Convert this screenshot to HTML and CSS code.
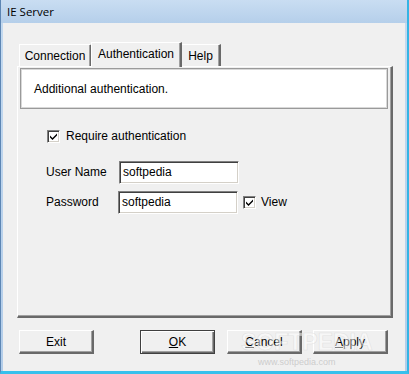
FILE: index.html
```html
<!DOCTYPE html>
<html>
<head>
<meta charset="utf-8">
<link rel="stylesheet" href="styles.css">
</head>
<body>
<div class="window">
  <div class="titlebar"><span class="title">IE Server</span></div>
  <div class="client">
    <div class="tabs">
      <div class="tab">Connection</div>
      <div class="tab active">Authentication</div>
      <div class="tab">Help</div>
    </div>
    <div class="pane">
      <div class="info">Additional authentication.</div>
      <div class="form">
        <label class="check-row">
          <span class="checkbox"><svg width="9" height="9" viewBox="0 0 9 9"><path d="M1 3.5 L3.5 6 L8 1.5 L8 3.5 L3.5 8 L1 5.5 Z" fill="#000"/></svg></span>
          <span>Require authentication</span>
        </label>
        <div class="field-row">
          <span class="label">User Name</span>
          <span class="input">softpedia</span>
        </div>
        <div class="field-row">
          <span class="label">Password</span>
          <span class="input pw">softpedia</span>
          <label class="view">
            <span class="checkbox"><svg width="9" height="9" viewBox="0 0 9 9"><path d="M1 3.5 L3.5 6 L8 1.5 L8 3.5 L3.5 8 L1 5.5 Z" fill="#000"/></svg></span>
            <span>View</span>
          </label>
        </div>
      </div>
    </div>
    <div class="buttons">
      <div class="btn">Exit</div>
      <div class="btn default ok"><u>O</u>K</div>
      <div class="btn cancel"><u>C</u>ancel</div>
      <div class="btn apply"><u>A</u>pply</div>
      <div class="watermark">SOFTPEDIA</div>
      <div class="watermark-url">www.softpedia.com</div>
    </div>
  </div>
</div>
</body>
</html>
```
FILE: styles.css
```css
* { box-sizing: border-box; }
html, body { margin: 0; padding: 0; background: #fff; }
body { width: 409px; height: 374px; overflow: hidden; font-family: "Liberation Sans", Arial, sans-serif; font-size: 12px; color: #000; }

.window {
  width: 409px; height: 374px;
  display: flex; flex-direction: column;
  background: linear-gradient(#c4daf0, #b3cde9);
  border-left: 1px solid #5d86b4;
  border-right: 2px solid #34b4e4;
  border-bottom: 3px solid #38c0ec;
  padding: 0 2px 0 2px;
}
.titlebar {
  height: 23px;
  display: flex; align-items: center;
  background: linear-gradient(#c9ddf2, #b5cfea);
  margin: 0 -2px;
  padding-left: 6px;
}
.title { font-family: "Open Sans", "DejaVu Sans", sans-serif; font-size: 11.5px; color: #000; }

.client {
  flex: 1;
  background: #f0f0f0;
  padding: 19px 12px 0 14px;
  display: flex; flex-direction: column;
  position: relative;
  overflow: hidden;
}

.tabs { display: flex; height: 24px; padding-left: 2px; align-items: flex-end; position: relative; z-index: 2; }
.tab {
  height: 22px;
  padding: 0 5px;
  display: flex; align-items: center; justify-content: center;
  border-top: 1px solid #fff;
  border-left: 1px solid #fff;
  border-right: 2px solid #696969;
  box-shadow: inset -1px 0 #a0a0a0;
  background: #f0f0f0;
}
.tab:first-child { width: 73px; }
.tab.active {
  width: 91px;
  height: 25px;
  margin-bottom: -1px;
  padding-bottom: 3px;
  margin-left: -1px;
  margin-right: -1px;
  position: relative;
  z-index: 3;
}
.tab:last-child { width: 40px; }

.pane {
  height: 252px;
  border-top: 1px solid #fff;
  border-left: 1px solid #fff;
  border-right: 2px solid #696969;
  border-bottom: 2px solid #696969;
  box-shadow: inset -1px -1px #a0a0a0;
  background: #f0f0f0;
  padding: 1px 3px 0 2px;
}
.info {
  height: 41px;
  background: #fff;
  border: 1px solid #9a9a9a;
  box-shadow: inset 0 0 0 1px #d8d8d8;
  display: flex; align-items: center;
  padding-left: 13px;
}
.form { padding: 20px 0 0 26px; }

.check-row { display: flex; align-items: center; gap: 6px; height: 14px; margin-left: 1px; }
.checkbox {
  width: 13px; height: 13px;
  background: #fff;
  border: 1px solid; border-color: #808080 #fff #fff #808080;
  box-shadow: inset 1px 1px #404040, inset -1px -1px #d4d0c8;
  display: flex; align-items: center; justify-content: center;
  flex: none;
}
.checkbox svg { display: block; }

.field-row { display: flex; align-items: center; height: 24px; margin-top: 6px; }
.check-row + .field-row { margin-top: 17px; }
.label { width: 73px; }
.input {
  width: 120px; height: 23px;
  background: #fff;
  border: 1px solid; border-color: #808080 #fff #fff #808080;
  box-shadow: inset 1px 1px #404040, inset -1px -1px #d4d0c8;
  display: flex; align-items: center;
  padding-left: 3px;
}
.input.pw { margin-left: -1px; }
.view { display: flex; align-items: center; gap: 5px; margin-left: 5px; }

.buttons {
  display: flex; align-items: center;
  margin-top: 12px;
  padding-left: 2px;
  position: relative;
}
.btn {
  width: 75px; height: 24px;
  display: flex; align-items: center; justify-content: center;
  border-top: 1px solid #fff; border-left: 1px solid #fff;
  border-right: 2px solid #696969; border-bottom: 2px solid #696969;
  box-shadow: inset -1px -1px #a0a0a0;
  background: #f0f0f0;
}
.btn.default {
  border: 1px solid #404040;
  box-shadow: inset 1px 1px #fff, inset -1px -1px #696969, inset -2px -2px #a0a0a0;
}
.ok { margin-left: 46px; }
.cancel { margin-left: 12px; }
.apply { margin-left: 11px; }
.btn u { text-decoration: underline; }

.watermark {
  position: absolute; left: 224px; top: -1px;
  font-family: "Liberation Sans", sans-serif; font-size: 23px; font-weight: bold;
  color: rgba(255,255,255,0.5);
  -webkit-text-stroke: 0.6px rgba(200,200,200,0.45);
  pointer-events: none;
  line-height: 26px;
}
.watermark-url {
  position: absolute; left: 241px; top: 27px;
  font-size: 9px; color: rgba(195,195,195,0.8);
  font-family: "Liberation Sans", sans-serif;
  pointer-events: none;
}
```
